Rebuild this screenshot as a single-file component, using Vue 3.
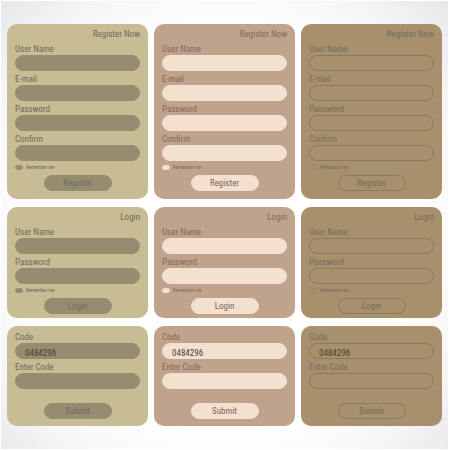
<script setup>
const themes = ['olive', 'rose', 'bronze']

const forms = [
  {
    id: 'register',
    title: 'Register Now',
    fields: [
      { name: 'user', label: 'User Name', type: 'text' },
      { name: 'email', label: 'E-mail', type: 'email' },
      { name: 'password', label: 'Password', type: 'password' },
      { name: 'confirm', label: 'Confirm', type: 'password' },
    ],
    remember: true,
    action: 'Register',
  },
  {
    id: 'login',
    title: 'Login',
    fields: [
      { name: 'user', label: 'User Name', type: 'text' },
      { name: 'password', label: 'Password', type: 'password' },
    ],
    remember: true,
    action: 'Login',
  },
  {
    id: 'code',
    fields: [
      { name: 'code', label: 'Code', type: 'text', value: '0484296' },
      { name: 'enter', label: 'Enter Code', type: 'text' },
    ],
    remember: false,
    action: 'Submit',
  },
]
</script>

<template>
  <main class="board">
    <div v-for="theme in themes" :key="theme" class="column" :class="theme">
      <form v-for="form in forms" :key="form.id" class="card" :class="form.id" @submit.prevent>
        <h2 v-if="form.title" class="title">{{ form.title }}</h2>
        <div v-for="field in form.fields" :key="field.name" class="field">
          <label class="label" :for="`${theme}-${form.id}-${field.name}`">{{ field.label }}</label>
          <input
            :id="`${theme}-${form.id}-${field.name}`"
            class="input"
            :type="field.type"
            :value="field.value"
          />
        </div>
        <label v-if="form.remember" class="remember">
          <input type="checkbox" class="check" />
          <span>Remember me</span>
        </label>
        <button class="button" type="submit">{{ form.action }}</button>
      </form>
    </div>
  </main>
</template>

<style>
body {
  margin: 0;
  min-height: 100vh;
  background: radial-gradient(ellipse at 50% 52%, #ffffff 60%, #f6f6f7 80%, #e6e7e9 100%);
  box-shadow: inset 0 0 0 1px #ffffff;
}
</style>

<style scoped>
.board {
  display: grid;
  grid-template-columns: repeat(3, 1fr);
  gap: 6px;
  padding: 24px 7px;
  font-family: "Roboto Condensed", "Arial Narrow", "Open Sans Condensed", "Liberation Sans", sans-serif;
  font-size: 9px;
  line-height: 12px;
}

.column {
  display: flex;
  flex-direction: column;
  gap: 8px;
  min-width: 0;
}

.olive {
  --card: #c8bc95;
  --fill: #968c70;
  --line: #968c70;
  --text: #6c695a;
  --button-text: #6c6c62;
  --value: #46413a;
}

.rose {
  --card: #c0a38c;
  --fill: #f4e0cf;
  --line: #f4e0cf;
  --text: #826959;
  --button-text: #796559;
  --value: #4a4039;
}

.bronze {
  --card: #a7906b;
  --fill: transparent;
  --line: #857a66;
  --text: #746c5e;
  --button-text: #746c5e;
  --value: #4a4234;
}

.card {
  display: flex;
  flex-direction: column;
  padding: 4px 8px 8px;
  border-radius: 10px;
  background: var(--card);
  color: var(--text);
}

.card.login {
  padding-bottom: 4px;
}

.card.code {
  padding-top: 3px;
  padding-bottom: 7px;
}

.title {
  margin: 0 0 1px;
  font-size: inherit;
  font-weight: normal;
  text-align: right;
}

.field {
  display: flex;
  flex-direction: column;
}

.label {
  padding-top: 2px;
}

.input {
  box-sizing: border-box;
  width: 100%;
  height: 16px;
  margin: 0;
  padding: 3px 9px 0;
  border: 1px solid var(--line);
  border-radius: 8px;
  background: var(--fill);
  color: var(--value);
  font: inherit;
}

.remember {
  display: flex;
  align-items: center;
  gap: 3px;
  height: 12px;
  font-size: 5px;
}

.check {
  appearance: none;
  box-sizing: border-box;
  width: 8px;
  height: 5px;
  margin: 0;
  border: 1px solid var(--line);
  border-radius: 3px;
  background: var(--fill);
}

.bronze .check {
  border-color: #998465;
}

.button {
  align-self: center;
  width: 68px;
  height: 16px;
  margin: 2px 0 0;
  padding: 0;
  border: 1px solid var(--line);
  border-radius: 8px;
  background: var(--fill);
  color: var(--button-text);
  font: inherit;
}

.code .button {
  margin-top: 14px;
}
</style>
